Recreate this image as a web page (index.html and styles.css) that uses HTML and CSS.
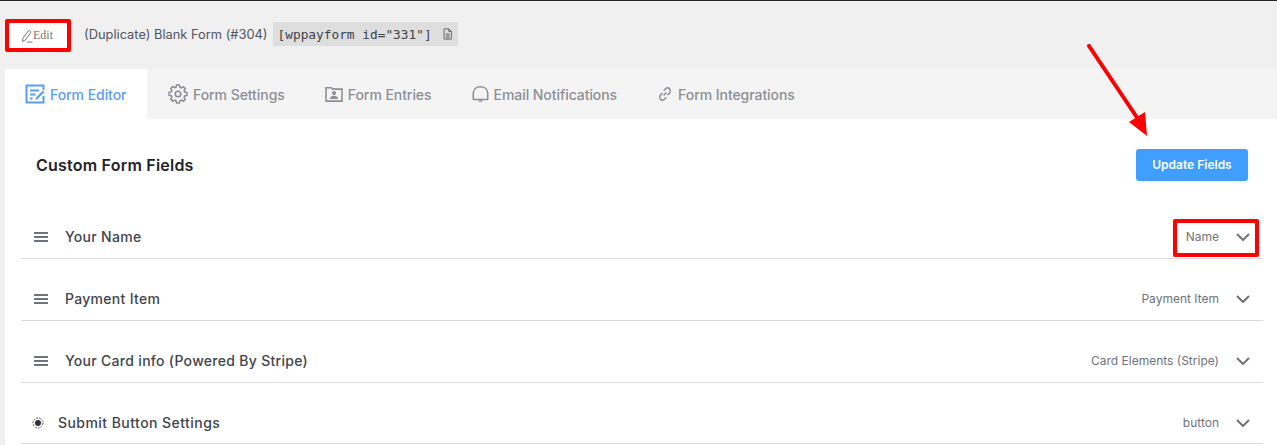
FILE: index.html
```html
<!DOCTYPE html>
<html lang="en">
<head>
<meta charset="utf-8">
<title>Form Editor</title>
<link rel="stylesheet" href="styles.css">
</head>
<body>
<header class="topbar">
  <a class="edit-btn">
    <svg class="edit-icon" viewBox="0 0 12 14" width="12" height="14"><path d="M1.500 12.500l.3-3.200L7 2.200c.6-.7 1.500-.8 2.200-.3s.8 1.400.3 2.100L4.300 11l-2.800 1.500z" fill="none" stroke="#777" stroke-width="1"/><path d="M6 13h5.500" stroke="#777" stroke-width="1"/></svg>
    <span>Edit</span>
  </a>
  <span class="form-title">(Duplicate) Blank Form (#304)</span>
  <span class="shortcode">
    <code>[wppayform id="331"]</code>
    <svg viewBox="0 0 12 14" width="11" height="12"><path d="M2 1h5.500L10.500 4v9H2z M7.500 1v3h3 M4 7h4.500 M4 9h4.500 M4 11h4.500" fill="none" stroke="#555" stroke-width="1"/></svg>
  </span>
</header>

<main class="card">
  <nav class="tabs">
    <a class="tab active">
      <svg class="tab-icon" viewBox="0 0 20 20" width="20" height="20"><path d="M18.500 6V1.500h-17v17h17V12" fill="none" stroke="#5b9df5" stroke-width="2"/><path d="M5 6.500h9M5 10.500h5.500M5 14.500h2.500" stroke="#5b9df5" stroke-width="2" fill="none"/><path d="M10.500 16l.5-2.500 7-7 1.500 1.500-7 7z" fill="#5b9df5"/></svg>
      Form Editor
    </a>
    <a class="tab">
      <svg class="tab-icon" viewBox="0 0 20 20" width="20" height="20"><path d="M8.400 1.200h3.200l.5 2.400 1.700.7 2-1.300 2.200 2.200-1.300 2 .7 1.700 2.400.5v3.200l-2.400.5-.7 1.700 1.300 2-2.200 2.200-2-1.300-1.700.7-.5 2.400H8.400l-.5-2.400-1.700-.7-2 1.300L2 16.600l1.300-2-.7-1.700-2.400-.5V9.200l2.400-.5.7-1.700L2 5l2.200-2.200 2 1.300 1.700-.7z" transform="translate(.9 .9) scale(.91) translate(0 -1)" fill="none" stroke="#8d8f94" stroke-width="1.700"/><circle cx="10" cy="10" r="2.800" fill="none" stroke="#8d8f94" stroke-width="1.600"/></svg>
      Form Settings
    </a>
    <a class="tab">
      <svg class="tab-icon" viewBox="0 0 20 18" width="18" height="16"><path d="M1 2h6l1.500 1.500H19V17H1z" fill="none" stroke="#8d8f94" stroke-width="1.800"/><circle cx="10" cy="8" r="2.300" fill="#8d8f94"/><path d="M5.500 14.500c0-2.500 2-3.500 4.500-3.500s4.500 1 4.500 3.500z" fill="#8d8f94"/></svg>
      Form Entries
    </a>
    <a class="tab">
      <svg class="tab-icon" viewBox="0 0 20 20" width="17" height="20"><path d="M2 16.500h16c.5 0 .5-.5.500-1V9c0-4.500-3.500-7.500-8.500-7.500S1.500 4.500 1.500 9v6.500c0 .5 0 1 .5 1z" fill="none" stroke="#8d8f94" stroke-width="1.800"/><path d="M8 18.300h4" stroke="#8d8f94" stroke-width="1.800"/></svg>
      Email Notifications
    </a>
    <a class="tab">
      <svg class="tab-icon" viewBox="0 0 16 16" width="16" height="16"><path d="M6.500 9.500l3-3M5.500 7L3 9.500a3 3 0 0 0 4 4.200l2.300-2.400M10.500 9L13 6.500a3 3 0 0 0-4-4.200L6.700 4.700" fill="none" stroke="#8d8f94" stroke-width="1.500"/></svg>
      Form Integrations
    </a>
  </nav>

  <section class="panel">
    <div class="panel-head">
      <h2>Custom Form Fields</h2>
      <button class="update-btn" type="button">Update Fields</button>
    </div>

    <div class="field first">
      <svg class="drag" viewBox="0 0 14 10" width="14" height="10"><path d="M0 1h14M0 5h14M0 9h14" stroke="#3f444d" stroke-width="1.500"/></svg>
      <span class="field-name">Your Name</span>
      <span class="field-type">Name</span>
      <svg class="chevron" viewBox="0 0 14 8" width="14" height="8"><path d="M1 1l6 6 6-6" fill="none" stroke="#6f7278" stroke-width="2"/></svg>
    </div>
    <div class="field">
      <svg class="drag" viewBox="0 0 14 10" width="14" height="10"><path d="M0 1h14M0 5h14M0 9h14" stroke="#3f444d" stroke-width="1.500"/></svg>
      <span class="field-name">Payment Item</span>
      <span class="field-type">Payment Item</span>
      <svg class="chevron" viewBox="0 0 14 8" width="14" height="8"><path d="M1 1l6 6 6-6" fill="none" stroke="#6f7278" stroke-width="2"/></svg>
    </div>
    <div class="field">
      <svg class="drag" viewBox="0 0 14 10" width="14" height="10"><path d="M0 1h14M0 5h14M0 9h14" stroke="#3f444d" stroke-width="1.500"/></svg>
      <span class="field-name">Your Card info (Powered By Stripe)</span>
      <span class="field-type">Card Elements (Stripe)</span>
      <svg class="chevron" viewBox="0 0 14 8" width="14" height="8"><path d="M1 1l6 6 6-6" fill="none" stroke="#6f7278" stroke-width="2"/></svg>
    </div>
    <div class="field submit">
      <svg class="dot" viewBox="0 0 12 12" width="12" height="12"><circle cx="6" cy="6" r="5" fill="none" stroke="#555a62" stroke-width="1" stroke-dasharray="2 1"/><circle cx="6" cy="6" r="3" fill="#2f343b"/></svg>
      <span class="field-name">Submit Button Settings</span>
      <span class="field-type">button</span>
      <svg class="chevron" viewBox="0 0 14 8" width="14" height="8"><path d="M1 1l6 6 6-6" fill="none" stroke="#6f7278" stroke-width="2"/></svg>
    </div>
  </section>
</main>

<div class="mark mark-edit"></div>
<div class="mark mark-name"></div>
<svg class="arrow" viewBox="0 0 70 100" width="70" height="100"><path d="M3 2L52 75" stroke="#f00" stroke-width="4" stroke-linecap="round"/><path d="M43 78L59 68L61 92z" fill="#f00"/></svg>
</body>
</html>
```
FILE: styles.css
```css
* { box-sizing: border-box; }
html, body { margin: 0; padding: 0; height: 445px; overflow: hidden; }
body {
  background: #f0f0f0;
  border-top: 1px solid #23272b;
  font-family: Inter, "Liberation Sans", sans-serif;
  color: #50555f;
  position: relative;
}
.topbar {
  height: 68px;
  display: flex;
  align-items: center;
  padding: 0 0 2px 9px;
}
.edit-btn {
  width: 58px;
  height: 25px;
  margin-top: 3px;
  background: #fff;
  display: flex;
  align-items: center;
  justify-content: center;
  font-family: "Liberation Serif", serif;
  font-size: 12px;
  color: #777;
}
.edit-icon { margin-left: -2px; }
.form-title {
  margin-left: 17px;
  font-size: 12.85px;
  color: #50555f;
}
.shortcode {
  margin-left: 5px;
  height: 24px;
  width: 185px;
  background: #dedede;
  display: flex;
  align-items: center;
  padding-left: 5px;
  gap: 10px;
}
.shortcode code {
  font-family: "DejaVu Sans Mono", monospace;
  font-size: 12.8px;
  color: #3d4148;
}
.card {
  margin-left: 5px;
  background: #fff;
  height: 376px;
}
.tabs {
  display: flex;
  height: 50px;
  background: #f4f4f4;
}
.tab {
  display: flex;
  align-items: center;
  gap: 5px;
  padding: 0 19px 0 21px;
  font-size: 14px;
  font-weight: 500;
  letter-spacing: -.06px;
  color: #8d8f94;
  white-space: nowrap;
}
.tab.active {
  background: #fff;
  color: #5b9df5;
  width: 142px;
  padding-left: 20px;
}
.panel { padding: 0 14px 0 16px; }
.panel-head {
  display: flex;
  justify-content: space-between;
  align-items: center;
  height: 92px;
  padding: 0 15px;
}
.panel-head h2 {
  margin: 0;
  font-size: 16px;
  font-weight: 600;
  letter-spacing: .22px;
  color: #1f2328;
}
.update-btn {
  width: 112px;
  height: 32px;
  border: 0;
  border-radius: 3px;
  padding: 0 0 2px;
  background: #409eff;
  color: #fff;
  font: 600 12px Inter, "Liberation Sans", sans-serif;
}
.field {
  display: flex;
  align-items: center;
  border-bottom: 1px solid #dcdcdc;
  padding: 30px 13px 12px;
  line-height: 19px;
}
.field.first { padding-top: 16px; }
.field.submit { padding: 30px 13px 11px; }
.drag { flex: none; }
.field-name {
  margin-left: 17px;
  font-size: 14px;
  font-weight: 500;
  letter-spacing: .3px;
  color: #3f444d;
}
.field-type {
  margin-left: auto;
  font-size: 12px;
  color: #6f7278;
}
.chevron { margin-left: 17px; flex: none; }
.dot { flex: none; margin-left: -2px; }
.submit .field-name { margin-left: 14px; letter-spacing: .45px; }
.mark { position: absolute; border: 4px solid #f00; border-radius: 2px; }
.mark-edit { left: 5px; top: 18px; width: 66px; height: 33px; }
.mark-name { left: 1173px; top: 218px; width: 86px; height: 38px; }
.arrow { position: absolute; left: 1086px; top: 43px; }
```
